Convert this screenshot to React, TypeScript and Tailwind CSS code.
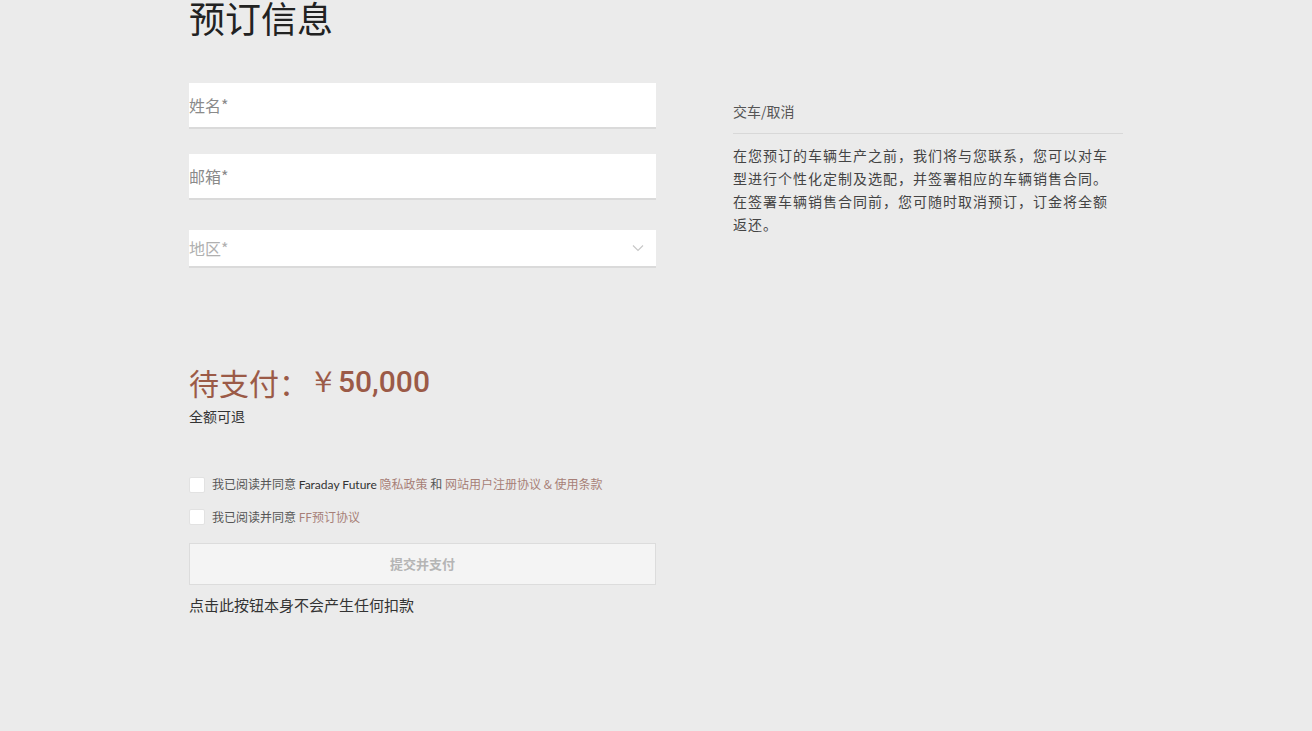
const cjk = "font-['Noto_Sans_CJK_SC','Noto_Sans',sans-serif]";

function Field({ label, light, select }: { label: string; light?: boolean; select?: boolean }) {
  return (
    <div
      className={`flex items-center justify-between bg-white border-b-2 border-[#dadada] ${
        select ? "h-[38px]" : "h-[46px]"
      }`}
    >
      <span className={`text-[16px] ${light ? "text-[#b0b0b0]" : "text-[#8a8a8a]"}`}>{label}</span>
      {select && (
        <svg width="12" height="8" viewBox="0 0 12 8" className="mr-[12px]">
          <path d="M1 1.5 L6 6.5 L11 1.5" fill="none" stroke="#c8c8c8" strokeWidth="1.2" />
        </svg>
      )}
    </div>
  );
}

function Check({ children }: { children: React.ReactNode }) {
  return (
    <label className="flex items-center gap-[7px] text-[12px] text-[#555]">
      <span className="w-[16px] h-[16px] bg-white border border-[#e2e2e2] rounded-[2px]" />
      <span>{children}</span>
    </label>
  );
}

export default function App() {
  return (
    <div className={`min-h-[731px] bg-[#ebebeb] ${cjk} overflow-hidden`}>
      <div className="flex pl-[189px]">
        <div className="w-[467px] flex flex-col">
          <h1 className="text-[36px] leading-[36px] text-[#222] font-normal -mt-[1px]">预订信息</h1>
          <div className="mt-[48px]">
            <Field label="姓名*" />
          </div>
          <div className="mt-[25px]">
            <Field label="邮箱*" />
          </div>
          <div className="mt-[30px]">
            <Field label="地区*" light select />
          </div>
          <div className="mt-[96px] flex items-center text-[#9b5a47] text-[30px] leading-[36px]">
            <span>待支付：</span>
            <span className="font-['Roboto',sans-serif] font-medium ml-[-1px]">￥50,000</span>
          </div>
          <div className="text-[14px] text-[#333] leading-[20px] mt-[6px]">全额可退</div>
          <div className="mt-[49px] flex flex-col gap-[14px]">
            <Check>
              我已阅读并同意 <span className="font-['Lato',sans-serif] text-[#333]">Faraday Future</span>{" "}
              <span className="text-[#a77f77]">隐私政策</span> 和{" "}
              <span className="text-[#a77f77]">网站用户注册协议 &amp; 使用条款</span>
            </Check>
            <Check>
              我已阅读并同意 <span className="text-[#a77f77]">FF预订协议</span>
            </Check>
          </div>
          <button className="mt-[17px] h-[42px] bg-[#f4f4f4] border border-[#dcdcdc] text-[13px] font-bold text-[#b5b5b5]">
            提交并支付
          </button>
          <div className="mt-[10px] text-[15px] text-[#333] leading-[20px]">点击此按钮本身不会产生任何扣款</div>
        </div>
        <div className="ml-[77px] w-[390px] pt-[100px]">
          <div className="text-[14px] text-[#555] leading-[22px]">交车/取消</div>
          <div className="mt-[11px] border-t border-[#d8d8d8]" />
          <p className="mt-[10px] w-[380px] text-[14px] tracking-[1px] text-[#444] leading-[23px]">
            在您预订的车辆生产之前，我们将与您联系，您可以对车型进行个性化定制及选配，并签署相应的车辆销售合同。在签署车辆销售合同前，您可随时取消预订，订金将全额返还。
          </p>
        </div>
      </div>
    </div>
  );
}
